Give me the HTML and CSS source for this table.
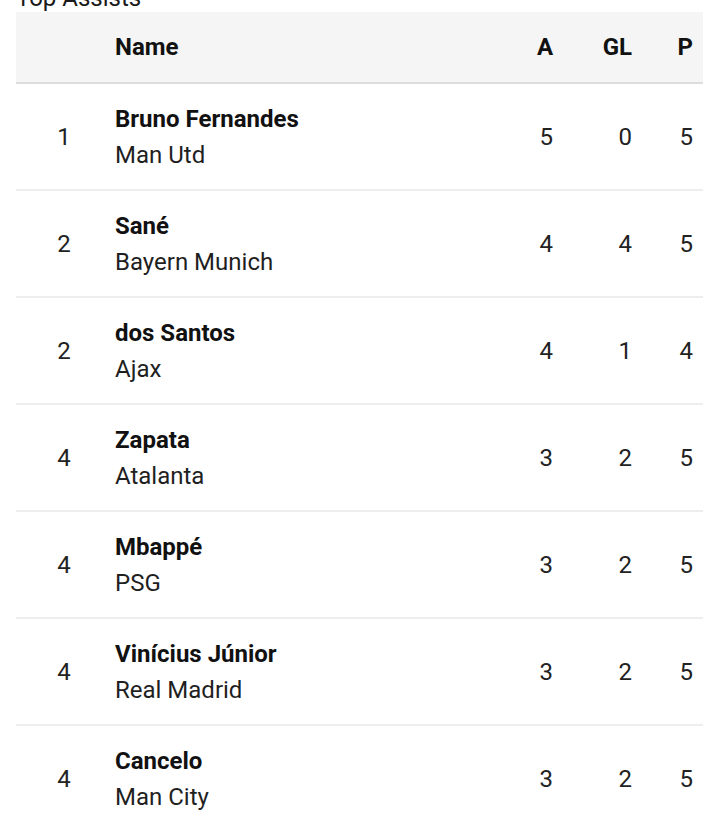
FILE: index.html
```html
<!DOCTYPE html>
<html>
<head>
<meta charset="utf-8">
<link rel="stylesheet" href="styles.css">
</head>
<body>
<div class="page">
  <h2 class="title">Top Assists</h2>
  <div class="table">
    <div class="row head">
      <div class="cell rank"></div>
      <div class="cell name">Name</div>
      <div class="cell num">A</div>
      <div class="cell num">GL</div>
      <div class="cell num">P</div>
    </div>
    <div class="row">
      <div class="cell rank">1</div>
      <div class="cell name"><div class="player">Bruno Fernandes</div><div class="team">Man Utd</div></div>
      <div class="cell num">5</div><div class="cell num">0</div><div class="cell num">5</div>
    </div>
    <div class="row">
      <div class="cell rank">2</div>
      <div class="cell name"><div class="player">Sané</div><div class="team">Bayern Munich</div></div>
      <div class="cell num">4</div><div class="cell num">4</div><div class="cell num">5</div>
    </div>
    <div class="row">
      <div class="cell rank">2</div>
      <div class="cell name"><div class="player">dos Santos</div><div class="team">Ajax</div></div>
      <div class="cell num">4</div><div class="cell num">1</div><div class="cell num">4</div>
    </div>
    <div class="row">
      <div class="cell rank">4</div>
      <div class="cell name"><div class="player">Zapata</div><div class="team">Atalanta</div></div>
      <div class="cell num">3</div><div class="cell num">2</div><div class="cell num">5</div>
    </div>
    <div class="row">
      <div class="cell rank">4</div>
      <div class="cell name"><div class="player">Mbappé</div><div class="team">PSG</div></div>
      <div class="cell num">3</div><div class="cell num">2</div><div class="cell num">5</div>
    </div>
    <div class="row">
      <div class="cell rank">4</div>
      <div class="cell name"><div class="player">Vinícius Júnior</div><div class="team">Real Madrid</div></div>
      <div class="cell num">3</div><div class="cell num">2</div><div class="cell num">5</div>
    </div>
    <div class="row">
      <div class="cell rank">4</div>
      <div class="cell name"><div class="player">Cancelo</div><div class="team">Man City</div></div>
      <div class="cell num">3</div><div class="cell num">2</div><div class="cell num">5</div>
    </div>
  </div>
</div>
</body>
</html>
```

FILE: styles.css
```css
html, body {
  margin: 0;
  padding: 0;
  background: #ffffff;
}
body {
  font-family: Roboto, "Liberation Sans", sans-serif;
  color: #1a1a1a;
}
.page {
  padding: 0 17px 0 16px;
}
.title {
  margin: -17px 0 -1px;
  font-size: 24px;
  line-height: 30px;
  font-weight: 400;
}
.table {
  display: flex;
  flex-direction: column;
}
.row {
  display: grid;
  grid-template-columns: 96px 1fr 60px 79px 61px;
  align-items: center;
  height: 105px;
  border-bottom: 2px solid #eeeeee;
}
.row.head {
  height: 70px;
  background: #f5f5f5;
  border-bottom: 2px solid #dddddd;
}
.head .cell {
  font-weight: 700;
  color: #111;
}
.cell {
  font-size: 24px;
  line-height: 36px;
}
.rank {
  text-align: center;
  color: #222;
}
.name {
  padding-left: 3px;
}
.num {
  text-align: right;
  padding-right: 10px;
  color: #222;
}
.player {
  font-weight: 700;
  color: #111;
}
.team {
  color: #1f1f1f;
}
```
